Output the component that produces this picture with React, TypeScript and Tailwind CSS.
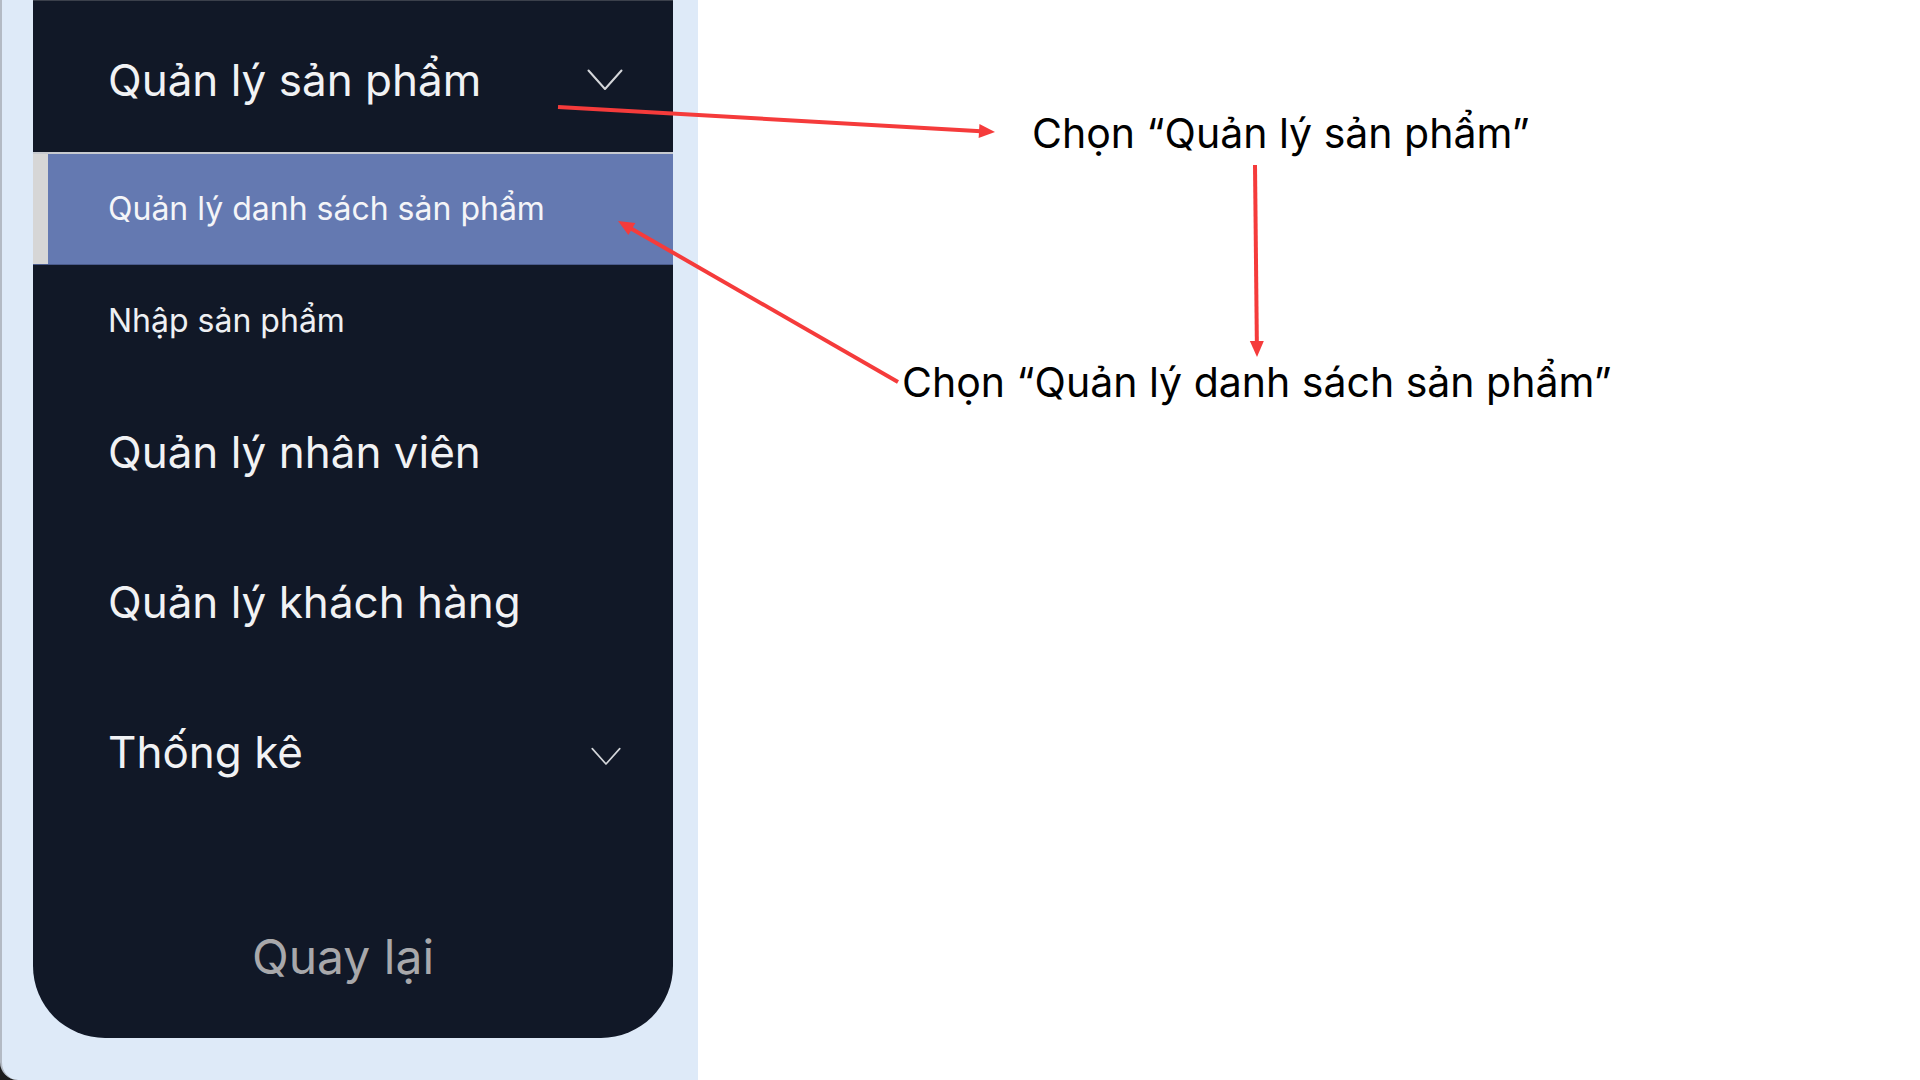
import React from "react";

const font = { fontFamily: "Inter, 'Noto Sans', sans-serif" };

function Chevron({ className }: { className?: string }) {
  return (
    <svg viewBox="0 0 36 22" className={className} fill="none">
      <path d="M1.5 1.5 L18 20 L34.5 1.5" stroke="#d4d6da" strokeWidth="2" strokeLinecap="round" strokeLinejoin="round" />
    </svg>
  );
}

type Arrow = { x1: number; y1: number; x2: number; y2: number };

// red callout arrows, head drawn at (x2, y2)
const arrows: Arrow[] = [
  { x1: 558, y1: 107, x2: 995, y2: 132 },
  { x1: 1255, y1: 165, x2: 1257, y2: 357 },
  { x1: 898, y1: 382, x2: 618, y2: 221 },
];

function ArrowLine({ a }: { a: Arrow }) {
  const dx = a.x2 - a.x1;
  const dy = a.y2 - a.y1;
  const len = Math.hypot(dx, dy);
  const ux = dx / len;
  const uy = dy / len;
  const head = 16;
  const half = 7;
  const bx = a.x2 - ux * head;
  const by = a.y2 - uy * head;
  const pts = `${a.x2},${a.y2} ${bx - uy * half},${by + ux * half} ${bx + uy * half},${by - ux * half}`;
  return (
    <g>
      <line x1={a.x1} y1={a.y1} x2={bx + ux * 2} y2={by + uy * 2} stroke="#f53b3b" strokeWidth="4" />
      <polygon points={pts} fill="#f53b3b" />
    </g>
  );
}

export default function App() {
  return (
    <div className="relative w-[1920px] h-[1080px] bg-white overflow-hidden" style={font}>
      {/* left app frame */}
      <div className="w-[698px] h-full bg-[#1c1c1c]">
        <div className="h-full bg-[#deeaf8] border-l-2 border-[#b3bac4] rounded-bl-[18px] pl-[31px]">
          <div className="w-[640px] h-[1038px] bg-[#111827] border-t border-[#3b404b] rounded-b-[72px] flex flex-col">
            <div className="h-[151px] flex items-center justify-between pl-[75px] pr-[50px] pt-[7px]">
              <span className="text-[44px] leading-none text-[#f1f2f4]">Quản lý sản phẩm</span>
              <Chevron className="w-[36px] h-[22px]" />
            </div>
            <div className="h-[2px] bg-[#c7cad0]" />
            <div className="h-[111px] flex bg-[#6479b1] border-b border-[#4a5b8c]">
              <div className="w-[15px] bg-[#d6d6d6]" />
              <div className="flex items-center pl-[60px] text-[32px] leading-none text-[#f4f5f8]">
                Quản lý danh sách sản phẩm
              </div>
            </div>
            <div className="h-[112px] flex items-center pl-[75px] text-[32px] leading-none text-[#eef0f3]">
              Nhập sản phẩm
            </div>
            <div className="h-[150px] flex items-center pl-[75px] text-[44px] leading-none text-[#f1f2f4]">
              Quản lý nhân viên
            </div>
            <div className="h-[150px] flex items-center pl-[75px] text-[44px] leading-none text-[#f1f2f4]">
              Quản lý khách hàng
            </div>
            <div className="h-[150px] flex items-center justify-between pl-[75px] pr-[52px]">
              <span className="text-[44px] leading-none text-[#f1f2f4]">Thống kê</span>
              <Chevron className="w-[30px] h-[19px] mt-[8px]" />
            </div>
            <div className="mt-auto mb-[31px] h-[100px] flex items-center justify-center pr-[20px] text-[48px] leading-none text-[#a8a8ab]">
              Quay lại
            </div>
          </div>
        </div>
      </div>

      {/* annotations */}
      <svg className="absolute left-0 top-0" width="1920" height="1080">
        {arrows.map((a, i) => (
          <ArrowLine key={i} a={a} />
        ))}
      </svg>
      <div className="absolute left-[1032px] top-[108px] h-[50px] flex items-center text-[41px] leading-none text-black whitespace-nowrap">
        Chọn “Quản lý sản phẩm”
      </div>
      <div className="absolute left-[902px] top-[357px] h-[50px] flex items-center text-[41px] leading-none text-black whitespace-nowrap">
        Chọn “Quản lý danh sách sản phẩm”
      </div>
    </div>
  );
}
